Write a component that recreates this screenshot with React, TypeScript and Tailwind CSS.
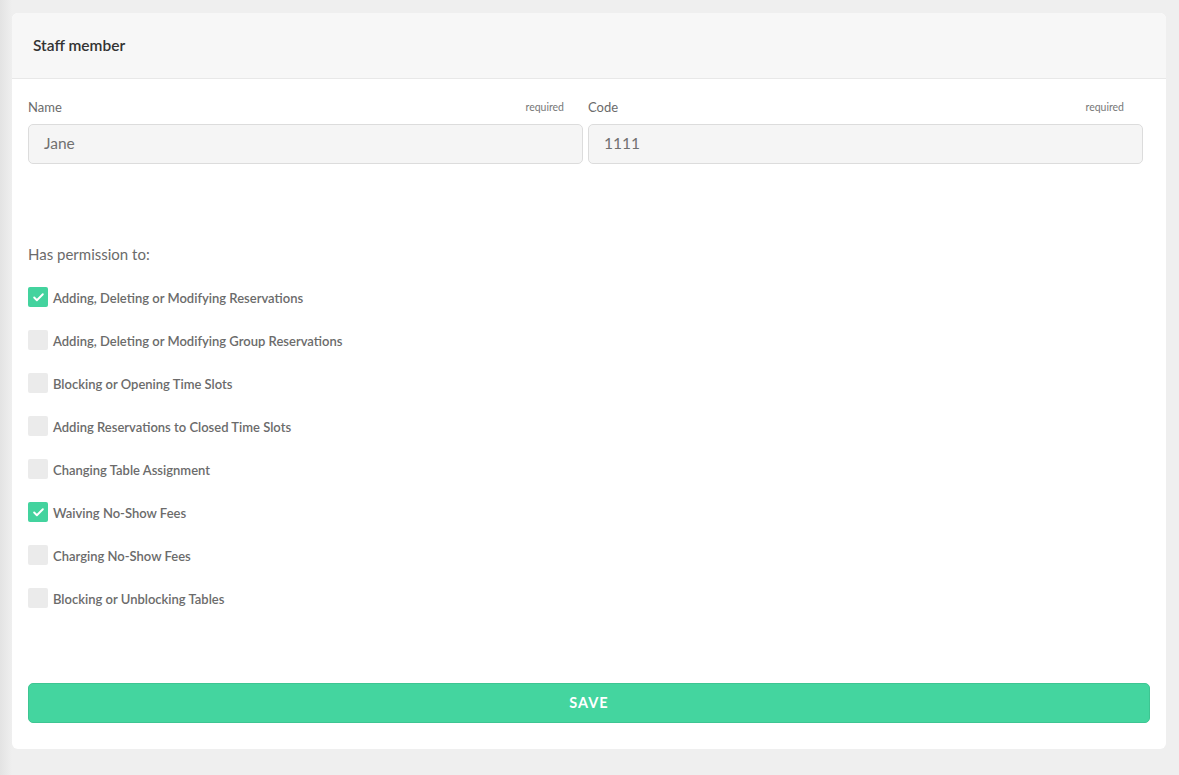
import { Check } from "lucide-react";

const permissions = [
  { label: "Adding, Deleting or Modifying Reservations", on: true },
  { label: "Adding, Deleting or Modifying Group Reservations", on: false },
  { label: "Blocking or Opening Time Slots", on: false },
  { label: "Adding Reservations to Closed Time Slots", on: false },
  { label: "Changing Table Assignment", on: false },
  { label: "Waiving No-Show Fees", on: true },
  { label: "Charging No-Show Fees", on: false },
  { label: "Blocking or Unblocking Tables", on: false },
];

function Field({ label, value }: { label: string; value: string }) {
  return (
    <div className="flex flex-col">
      <div className="flex items-center justify-between pr-[19px] h-[16px] mt-[1px]">
        <span className="text-[13px] text-[#6b6b6b]">{label}</span>
        <span className="text-[10.5px] text-[#777]">required</span>
      </div>
      <div className="mt-[8px] h-[40px] rounded-[5px] border border-[#dcdcdc] bg-[#f5f5f5] flex items-center px-[15px] text-[15.5px] text-[#707070]">
        {value}
      </div>
    </div>
  );
}

export default function App() {
  return (
    <div
      className="min-h-[775px] bg-[linear-gradient(to_right,#e3e3e3,#efefef_12px)] pt-[13px] pl-[12px] pr-[13px] pb-[27px]"
      style={{ fontFamily: "Lato, 'Open Sans', sans-serif" }}
    >
      <div className="rounded-[6px] bg-white overflow-hidden">
        <div className="h-[66px] bg-[#f7f7f7] border-b border-[#e8e8e8] flex items-center px-[21px]">
          <h1 className="text-[15.5px] font-semibold text-[#333]">Staff member</h1>
        </div>

        <div className="px-[16px] pt-[20px] pb-[26px]">
          <div className="grid grid-cols-[555px_555px] gap-[5px]">
            <Field label="Name" value="Jane" />
            <Field label="Code" value="1111" />
          </div>

          <p className="mt-[81px] text-[15px] leading-[18px] text-[#6b6b6b]">Has permission to:</p>

          <div className="mt-[24px] flex flex-col gap-[23px]">
            {permissions.map((p) => (
              <label key={p.label} className="flex items-center gap-[5px] h-[20px]">
                <span
                  className={
                    p.on
                      ? "w-[20px] h-[20px] rounded-[2px] bg-[#43d39e] flex items-center justify-center"
                      : "w-[20px] h-[20px] rounded-[2px] bg-[#ebebeb]"
                  }
                >
                  {p.on && <Check size={13} strokeWidth={3.5} className="text-white" />}
                </span>
                <span className="mt-[4px] text-[13px] font-semibold text-[#6b6b6b]">{p.label}</span>
              </label>
            ))}
          </div>

          <button
            type="button"
            className="mt-[75px] w-full h-[40px] rounded-[5px] border border-[#3ec592] bg-[#44d59f] text-white text-[14.5px] font-bold tracking-[1px]"
          >
            SAVE
          </button>
        </div>
      </div>
    </div>
  );
}
